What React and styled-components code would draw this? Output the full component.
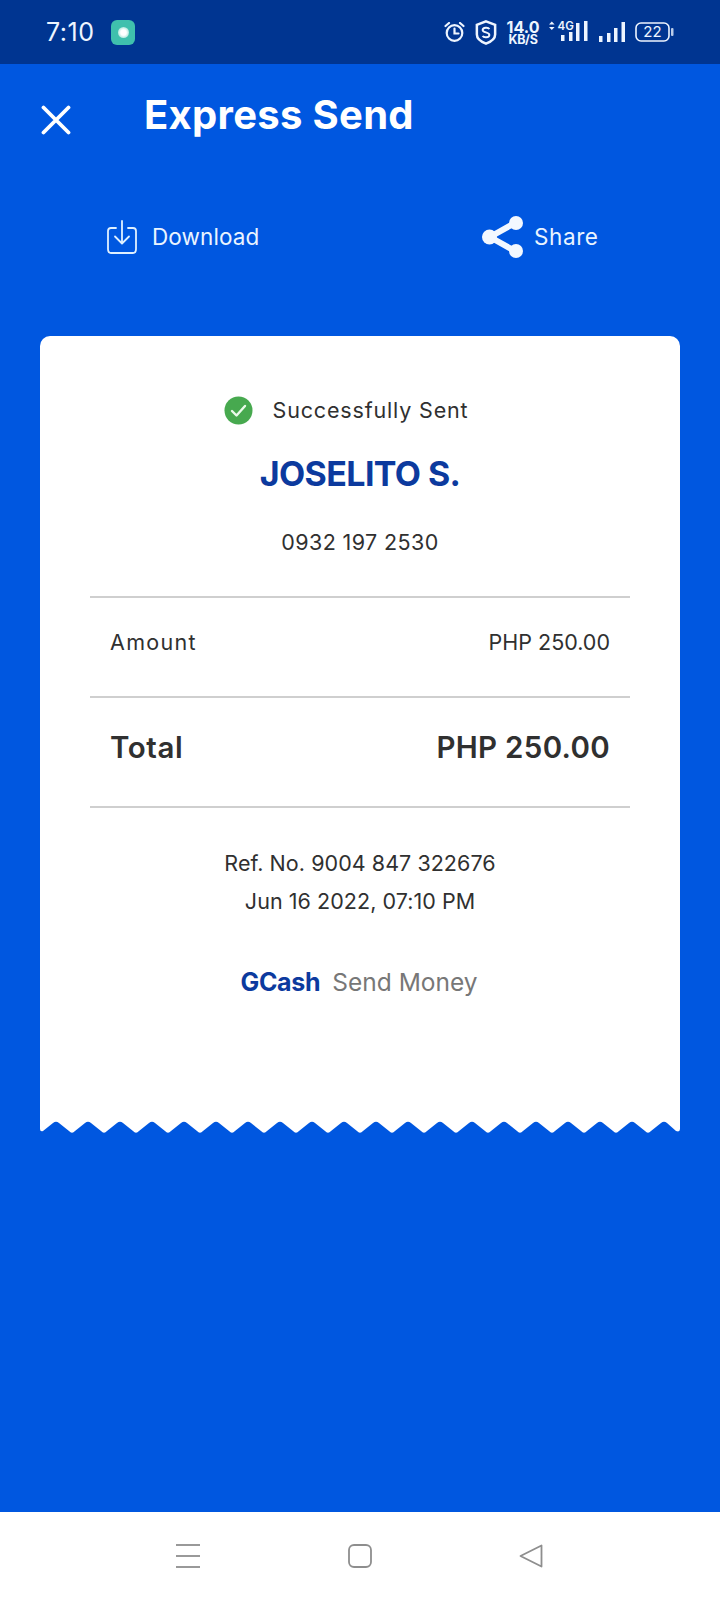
import React from 'react';
import styled, { createGlobalStyle } from 'styled-components';

const GlobalStyle = createGlobalStyle`
  html, body { margin: 0; padding: 0; background: #0057e0; }
  * { box-sizing: border-box; }
`;

const Page = styled.div`
  width: 720px;
  height: 1600px;
  display: flex;
  flex-direction: column;
  font-family: Inter, "Liberation Sans", sans-serif;
  background: #0057e0;
  overflow: hidden;
`;

const StatusBar = styled.div`
  height: 64px;
  flex: none;
  background: #003591;
  color: #eef5ff;
  display: flex;
  align-items: center;
  justify-content: space-between;
  padding: 0 46px 0 46px;
`;

const StatusGroup = styled.div`
  display: flex;
  align-items: center;
  gap: ${p => p.$gap || 0}px;
`;

const Time = styled.span`
  font-size: 25px;
  letter-spacing: 0.5px;
`;

const AppBadge = styled.div`
  width: 24px;
  height: 25px;
  border-radius: 6px;
  background: #3fc0ad;
  display: flex;
  align-items: center;
  justify-content: center;
  &::after {
    content: '';
    width: 11px;
    height: 11px;
    border-radius: 50%;
    background: radial-gradient(circle, #ffffff 35%, #b4e9df 70%);
  }
`;

const Speed = styled.div`
  width: 31px;
  display: flex;
  flex-direction: column;
  align-items: center;
  font-weight: 700;
  line-height: 11px;
  font-size: 12.5px;
  letter-spacing: -0.3px;
`;

const SpeedValue = styled.span`
  font-size: 16px;
  line-height: 14px;
  letter-spacing: 0;
`;

const Header = styled.div`
  display: flex;
  align-items: center;
  height: 104px;
  padding-left: 41px;
  color: #fff;
`;

const CloseIcon = styled.svg`
  margin-top: 8px;
  flex: none;
`;

const Title = styled.h1`
  margin: 0 0 4px 73px;
  font-size: 40px;
  font-weight: 700;
  letter-spacing: 0.3px;
`;

const Actions = styled.div`
  display: flex;
  align-items: center;
  height: 41px;
  margin-top: 48px;
`;

const Action = styled.div`
  display: flex;
  align-items: center;
  color: #eaf4ff;
  font-size: 22.5px;
  letter-spacing: ${p => p.$spacing}px;
  width: ${p => p.$width}px;
  margin-left: ${p => p.$left}px;
  gap: ${p => p.$gap}px;
`;

const Receipt = styled.div`
  margin: 79px 40px 0;
  width: 640px;
`;

const Sheet = styled.div`
  background: #fff;
  border-radius: 10px 10px 0 0;
  height: 785px;
  padding: 55px 50px 0;
  display: flex;
  flex-direction: column;
  align-items: center;
  color: #303030;
`;

const Wave = styled.svg`
  display: block;
`;

const StatusLine = styled.div`
  display: flex;
  align-items: center;
  gap: 20px;
  height: 38px;
  font-size: 21.5px;
  letter-spacing: 0.83px;
  margin-left: -28px;
`;

const Name = styled.div`
  margin-top: 25px;
  color: #0c3a9e;
  font-size: 34px;
  font-weight: 700;
  line-height: 40px;
  letter-spacing: -0.6px;
`;

const Phone = styled.div`
  margin-top: 34px;
  height: 28px;
  line-height: 28px;
  font-size: 21.5px;
  letter-spacing: 0.4px;
`;

const Row = styled.div`
  width: 100%;
  display: flex;
  justify-content: space-between;
  align-items: center;
  border-top: 2px solid #cfcfcf;
  padding: 0 20px 10px;
  height: ${p => p.$height}px;
  font-size: ${p => (p.$total ? 29.5 : 21.5)}px;
  font-weight: ${p => (p.$total ? 600 : 400)};
`;

const FirstRow = styled(Row)`
  margin-top: 40px;
`;

const Label = styled.span`
  letter-spacing: ${p => p.$spacing || 0}px;
`;

const Meta = styled.div`
  width: 100%;
  border-top: 2px solid #cfcfcf;
  padding-top: 36px;
  text-align: center;
  font-size: 21.5px;
  line-height: 38px;
  letter-spacing: 0.05px;
`;

const Brand = styled.div`
  margin-top: 47px;
  display: flex;
  align-items: baseline;
  gap: 12px;
  font-size: 24.5px;
  color: #777;
  margin-left: -2px;
`;

const BrandName = styled.span`
  font-size: 25px;
  font-weight: 700;
  color: #0c3a9e;
  letter-spacing: -0.3px;
`;

const Spacer = styled.div`
  flex: 1;
`;

const NavBar = styled.div`
  height: 88px;
  flex: none;
  background: #fff;
  display: flex;
  align-items: center;
  justify-content: space-between;
  padding: 0 177px 0 176px;
`;

// peaks every 32px, starting 16px from the left edge of the sheet
const wavePath = () => {
  let d = 'M0 0 L0 8 Q0 11 3 10 L13 2 Q16 -0.5 19 2';
  for (let x = 16; x < 624; x += 32) {
    d += ` L${x + 13} 10 Q${x + 16} 13.5 ${x + 19} 10 L${x + 29} 2 Q${x + 32} -0.5 ${x + 35} 2`;
  }
  d += ' L636 10 Q640 11.500 640 8 L640 0 Z';
  return d;
};

const App = () => (
  <Page>
    <GlobalStyle />
    <StatusBar>
      <StatusGroup $gap={17}>
        <Time>7:10</Time>
        <AppBadge />
      </StatusGroup>
      <StatusGroup $gap={10.5}>
        <svg width="21" height="20" viewBox="0 0 21 20" fill="none" stroke="#eef5ff" strokeWidth="2.2">
          <circle cx="10.500" cy="11" r="7.800" />
          <path d="M10.500 6.500V11.500H14.500M1.500 4l3.500-3M19.500 4l-3.500-3" strokeLinecap="round" />
        </svg>
        <svg width="22" height="25" viewBox="0 0 22 26" fill="none" stroke="#eef5ff" strokeWidth="2.600">
          <path d="M11 1.500 L20.500 5 V15 C20.500 20 15 23 11 24.500 C7 23 1.500 20 1.500 15 V5 Z" />
          <path d="M14.500 9.500C13.500 7.500 7.500 7.500 7.500 10.500C7.500 13.500 14.500 12.300 14.500 15.500C14.500 18.500 8.500 18.500 7.500 16.500" strokeWidth="2" />
        </svg>
        <Speed>
          <SpeedValue>14.0</SpeedValue>
          KB/S
        </Speed>
        <svg width="39" height="24" viewBox="0 0 39 24" fill="#eef5ff">
          <path d="M0 4.500l2.800-3 2.800 3zM0 7l2.800 3 2.800-3z" />
          <text x="8.500" y="10" fontSize="11.500" fontWeight="600" fontFamily="Inter, sans-serif">4G</text>
          <rect x="12" y="15" width="3.500" height="6" />
          <rect x="20" y="12" width="3.500" height="9" />
          <rect x="27" y="3" width="3.500" height="18" />
          <rect x="35" y="1" width="3.500" height="20" />
        </svg>
        <svg width="26" height="21" viewBox="0 0 26 21" fill="#eef5ff">
          <rect x="0" y="14" width="3.500" height="6" />
          <rect x="8" y="11" width="3.500" height="9" />
          <rect x="15" y="6" width="3.500" height="14" />
          <rect x="22.500" y="0" width="3.500" height="20" />
        </svg>
        <svg width="39" height="20" viewBox="0 0 39 20">
          <rect x="1" y="1" width="33" height="18" rx="5" fill="none" stroke="#eef5ff" strokeWidth="1.600" />
          <rect x="36" y="6" width="2.500" height="8" rx="1" fill="#b9cbe8" />
          <text x="17.500" y="15" textAnchor="middle" fontSize="15" fill="#eef5ff" fontFamily="Inter, sans-serif">22</text>
        </svg>
      </StatusGroup>
    </StatusBar>

    <Header>
      <CloseIcon width="30" height="30" viewBox="0 0 30 30" stroke="#fff" strokeWidth="3.800" strokeLinecap="round">
        <path d="M2.500 2.500L27.500 27.500M27.500 2.500L2.500 27.500" />
      </CloseIcon>
      <Title>Express Send</Title>
    </Header>

    <Actions>
      <Action $left={107} $width={375} $gap={15} $spacing={0.1}>
        <svg width="30" height="34" viewBox="0 0 30 34" fill="none" stroke="#dff0ff" strokeWidth="1.800" strokeLinecap="round" strokeLinejoin="round">
          <path d="M9 8H4C2 8 1 9 1 11V29C1 31 2 33 4 33H26C28 33 29 31 29 29V11C29 9 28 8 26 8H21" />
          <path d="M15 1V23M8 16.500L15 23.500L22 16.500" />
        </svg>
        Download
      </Action>
      <Action $left={0} $width={120} $gap={10} $spacing={0.6}>
        <svg width="42" height="42" viewBox="0 0 42 42" fill="#f3f8ff" stroke="#f3f8ff" style={{ flex: 'none' }}>
          <path d="M33 7L8 21L33 35" fill="none" strokeWidth="6" />
          <circle cx="34" cy="7" r="7" stroke="none" />
          <circle cx="7.500" cy="21" r="7.500" stroke="none" />
          <circle cx="34" cy="35" r="7" stroke="none" />
        </svg>
        Share
      </Action>
    </Actions>

    <Receipt>
      <Sheet>
        <StatusLine>
          <svg width="29" height="29" viewBox="0 0 29 29">
            <circle cx="14.500" cy="14.500" r="14" fill="#47a94f" />
            <path d="M8 15L12.500 19.500L21 10" fill="none" stroke="#eafaea" strokeWidth="2.400" strokeLinecap="round" strokeLinejoin="round" />
          </svg>
          Successfully Sent
        </StatusLine>
        <Name>JOSELITO S.</Name>
        <Phone>0932 197 2530</Phone>
        <FirstRow $height={100}>
          <Label $spacing={1.3}>Amount</Label>
          <Label>PHP 250.00</Label>
        </FirstRow>
        <Row $height={110} $total>
          <Label $spacing={0.6}>Total</Label>
          <Label $spacing={0.3}>PHP 250.00</Label>
        </Row>
        <Meta>
          <div>Ref. No. 9004 847 322676</div>
          <div>Jun 16 2022, 07:10 PM</div>
        </Meta>
        <Brand>
          <BrandName>GCash</BrandName>
          Send Money
        </Brand>
        <Spacer />
      </Sheet>
      <Wave width="640" height="13" viewBox="0 0 640 13">
        <path d={wavePath()} fill="#fff" />
      </Wave>
    </Receipt>

    <Spacer />

    <NavBar>
      <svg width="24" height="24" viewBox="0 0 24 24" stroke="#999" strokeWidth="1.800">
        <path d="M0 1H24M0 12H24M0 23H24" />
      </svg>
      <svg width="24" height="24" viewBox="0 0 24 24" fill="none" stroke="#8e8e8e" strokeWidth="1.800">
        <rect x="1" y="1" width="22" height="22" rx="5" />
      </svg>
      <svg width="24" height="24" viewBox="0 0 24 24" fill="none" stroke="#8e8e8e" strokeWidth="1.800" strokeLinejoin="round">
        <path d="M1.500 12L22.500 1.500V22.500Z" />
      </svg>
    </NavBar>
  </Page>
);

export default App;
